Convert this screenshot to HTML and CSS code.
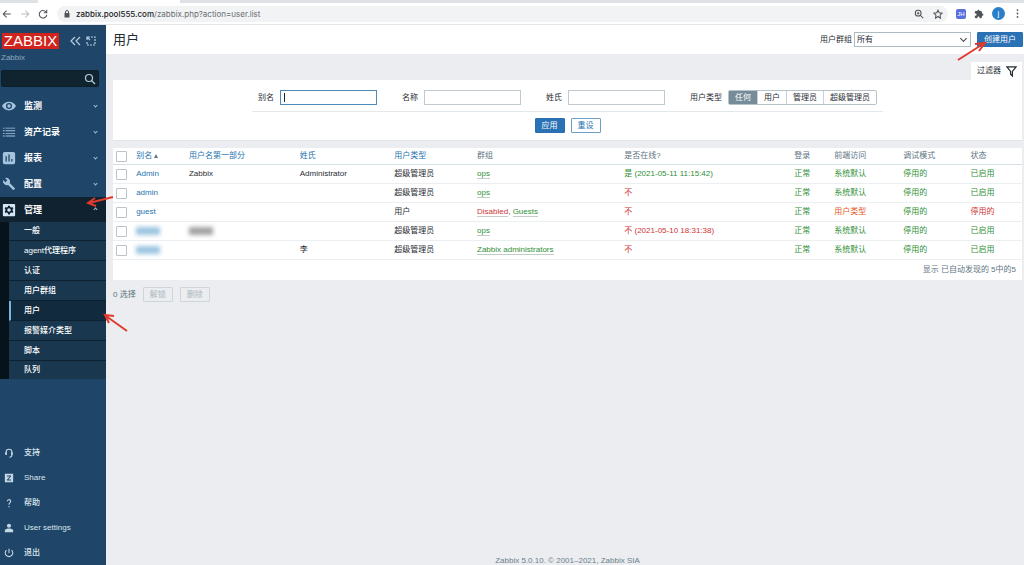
FILE: index.html
```
<!DOCTYPE html>
<html lang="zh-CN">
<head>
    <meta charset="UTF-8">
    <title>用户</title>
    <link rel="stylesheet" href="styles.css">
</head>
<body>
    <!-- 浏览器工具栏 -->
    <div class="tab-strip"><div class="tab-active"></div></div>
    <div class="toolbar">
        <svg class="tool-icon" viewBox="0 0 24 24"><path d="M21 12H4M11 4l-8 8 8 8"/></svg>
        <svg class="tool-icon tool-off" viewBox="0 0 24 24"><path d="M3 12h17M13 4l8 8-8 8"/></svg>
        <svg class="tool-icon" viewBox="0 0 24 24"><path d="M19 7a9 9 0 1 0 2 7M21 2v7h-7"/></svg>
        <div class="address">
            <svg class="lock" viewBox="0 0 12 16"><path d="M1 6h10v9H1z"/><path class="shackle" d="M3 7V4a3 3 0 0 1 6 0v3"/></svg>
            <span class="url"><b>zabbix.pool555.com</b>/zabbix.php?action=user.list</span>
            <svg class="tool-icon" viewBox="0 0 24 24"><circle cx="10" cy="10" r="7"/><path d="M15 15l7 7M7 10h6M10 7v6"/></svg>
            <svg class="tool-icon" viewBox="0 0 24 24"><path d="M12 3l3 6 7 1-5 5 1 7-6-4-6 4 1-7-5-5 7-1z"/></svg>
        </div>
        <span class="ext">JH</span>
        <svg class="tool-icon puzzle" viewBox="0 0 24 24"><path d="M20 11h-1V7a2 2 0 0 0-2-2h-4V4a2.500 2.500 0 0 0-5 0v1H4a2 2 0 0 0-2 2v4h1.500a2.700 2.700 0 0 1 0 5.400H2V20a2 2 0 0 0 2 2h4v-1.500a2.700 2.700 0 0 1 5.400 0V22H17a2 2 0 0 0 2-2v-4h1a2.500 2.500 0 0 0 0-5z"/></svg>
        <span class="avatar">j</span>
        <svg class="dots" viewBox="0 0 4 16"><circle cx="2" cy="3" r="1.300"/><circle cx="2" cy="8" r="1.300"/><circle cx="2" cy="13" r="1.300"/></svg>
    </div>

    <div class="page">
        <!-- 侧边栏 -->
        <aside class="sidebar">
            <div class="brand">
                <a class="logo" href="#">ZABBIX</a>
                <button class="icon-btn" aria-label="收起"><svg viewBox="0 0 12 12"><path d="M6 2L2 6l4 4M11 2L7 6l4 4"/></svg></button>
                <button class="icon-btn" aria-label="隐藏"><svg viewBox="0 0 12 12"><path d="M6 2h4v8H2V7" stroke-dasharray="2 1"/><path d="M2 5V2h3M2 2l3 3"/></svg></button>
            </div>
            <div class="server">Zabbix</div>
            <form class="search">
                <input type="text" aria-label="搜索">
                <button class="icon-btn" type="button" aria-label="搜索"><svg viewBox="0 0 12 12"><circle cx="5" cy="5" r="3.500"/><path d="M7.500 7.500L11 11"/></svg></button>
            </form>

            <ul class="menu">
                <li><a href="#">
                    <svg class="menu-icon" viewBox="0 0 16 16"><path fill-rule="evenodd" d="M8 3C4.500 3 1.500 5 0 8c1.500 3 4.500 5 8 5s6.500-2 8-5c-1.500-3-4.500-5-8-5zm0 1.500a3.500 3.500 0 1 1 0 7 3.500 3.500 0 0 1 0-7zM8 6a2 2 0 1 0 0 4 2 2 0 0 0 0-4z"/></svg>
                    监测<i class="chevron"></i></a></li>
                <li><a href="#">
                    <svg class="menu-icon" viewBox="0 0 16 16"><path d="M1 3h2v1H1zM4 3h11v1H4zM1 6h2v1H1zM4 6h11v1H4zM1 9h2v1H1zM4 9h11v1H4zM1 12h2v1H1zM4 12h11v1H4z"/></svg>
                    资产记录<i class="chevron"></i></a></li>
                <li><a href="#">
                    <svg class="menu-icon" viewBox="0 0 16 16"><path fill-rule="evenodd" d="M3 1h10a2 2 0 0 1 2 2v10a2 2 0 0 1-2 2H3a2 2 0 0 1-2-2V3a2 2 0 0 1 2-2zm1 5v6h1.500V6zm3.300-2v8h1.500V4zm3.200 5v3H12V9z"/></svg>
                    报表<i class="chevron"></i></a></li>
                <li><a href="#">
                    <svg class="menu-icon" viewBox="0 0 16 16"><path d="M15 13L9 7a4.500 4.500 0 0 0-5.500-5.800L6 3.800 4 6 1.200 3.400A4.500 4.500 0 0 0 7 9l6 6z"/></svg>
                    配置<i class="chevron"></i></a></li>
                <li class="open"><a href="#">
                    <svg class="menu-icon" viewBox="0 0 16 16"><path fill-rule="evenodd" d="M2 1h12a1 1 0 0 1 1 1v12a1 1 0 0 1-1 1H2a1 1 0 0 1-1-1V2a1 1 0 0 1 1-1zm5 2l-.4 1.500-1.200.7L4 4.700 3 6.500l1 1v1l-1 1 1 1.800 1.400-.5 1.200.7L7 13h2l.4-1.500 1.200-.7 1.400.5 1-1.800-1-1v-1l1-1-1-1.800-1.400.5-1.200-.7L9 3zm1 3a2 2 0 1 1 0 4 2 2 0 0 1 0-4z"/></svg>
                    管理<i class="chevron up"></i></a>
                    <svg class="arrow arrow-menu" viewBox="0 0 28 14"><path d="M27 2L3 8M9 3L2 8l8 3"/></svg>
                    <ul class="submenu">
                        <li><a href="#">一般</a></li>
                        <li><a href="#">agent代理程序</a></li>
                        <li><a href="#">认证</a></li>
                        <li><a href="#">用户群组</a></li>
                        <li class="selected"><a href="#">用户</a>
                            <svg class="arrow arrow-user" viewBox="0 0 26 20"><path d="M24 18L3 3M6 10L2 2l9 1"/></svg></li>
                        <li><a href="#">报警媒介类型</a></li>
                        <li><a href="#">脚本</a></li>
                        <li><a href="#">队列</a></li>
                    </ul>
                </li>
            </ul>

            <ul class="menu-bottom">
                <li><a href="#"><svg class="small-icon" viewBox="0 0 12 12"><path class="line" d="M2.500 8V5a3.500 3.500 0 0 1 7 0v3c0 2-1 3-3 3"/><path d="M1.500 5h2v3h-2zM8.500 5h2v3h-2z"/></svg>支持</a></li>
                <li><a href="#"><svg class="small-icon" viewBox="0 0 12 12"><path fill-rule="evenodd" d="M1 1h10v10H1zm2.500 2v1.200H7L3.500 8v1h5V7.800H5.200L8.500 4V3z"/></svg>Share</a></li>
                <li><a href="#"><svg class="small-icon" viewBox="0 0 12 12"><path class="line" d="M4 4a2 2 0 1 1 3 1.700C6 6.300 6 7 6 8M6 9.500V11"/></svg>帮助</a></li>
                <li><a href="#"><svg class="small-icon" viewBox="0 0 12 12"><circle cx="6" cy="3.300" r="2.500"/><path d="M1 11V9c0-2 3-2.500 5-2.500S11 7 11 9v2z"/></svg>User settings</a></li>
                <li><a href="#"><svg class="small-icon" viewBox="0 0 12 12"><path class="line" d="M3 2.500a4.500 4.500 0 1 0 6 0M6 1v5"/></svg>退出</a></li>
            </ul>
        </aside>

        <!-- 主内容 -->
        <main class="content">
            <header class="page-header">
                <h1>用户</h1>
                <label for="group">用户群组</label>
                <div class="select-box">
                    <select id="group"><option>所有</option></select>
                </div>
                <div class="create">
                    <button class="btn btn-primary" type="button">创建用户</button>
                    <svg class="arrow arrow-create" viewBox="0 0 30 20"><path d="M1 19L26 3M18 3l10-1-6 8"/></svg>
                </div>
            </header>

            <div class="filter-tab">
                <a href="#">过滤器
                    <svg viewBox="0 0 12 12"><path d="M1 1h10L7 6v5L5 9V6z"/></svg></a>
            </div>
            <form class="filter">
                <div class="filter-fields">
                    <div class="field">
                        <label for="alias">别名</label>
                        <div class="focus-box"><input class="text-input focused" type="text" id="alias"><span class="caret"></span></div>
                    </div>
                    <div class="field">
                        <label for="name">名称</label>
                        <input class="text-input" type="text" id="name">
                    </div>
                    <div class="field">
                        <label for="surname">姓氏</label>
                        <input class="text-input" type="text" id="surname">
                    </div>
                    <div class="field">
                        <span>用户类型</span>
                        <div class="radios">
                            <input type="radio" name="type" id="type-any" checked><label for="type-any">任何</label>
                            <input type="radio" name="type" id="type-user"><label for="type-user">用户</label>
                            <input type="radio" name="type" id="type-admin"><label for="type-admin">管理员</label>
                            <input type="radio" name="type" id="type-super"><label for="type-super">超级管理员</label>
                        </div>
                    </div>
                </div>
                <div class="filter-buttons">
                    <button class="btn btn-primary" type="button">应用</button>
                    <button class="btn" type="button">重设</button>
                </div>
            </form>

            <table class="list">
                <colgroup>
                    <col class="c-check"><col class="c-alias"><col class="c-name"><col class="c-surname"><col class="c-type"><col class="c-groups">
                    <col class="c-online"><col class="c-login"><col class="c-front"><col class="c-debug"><col>
                </colgroup>
                <thead>
                    <tr>
                        <th><input type="checkbox" aria-label="全选"></th>
                        <th><a href="#">别名 <i class="sort"></i></a></th>
                        <th><a href="#">用户名第一部分</a></th>
                        <th><a href="#">姓氏</a></th>
                        <th><a href="#">用户类型</a></th>
                        <th>群组</th>
                        <th>是否在线?</th>
                        <th>登录</th>
                        <th>前端访问</th>
                        <th>调试模式</th>
                        <th>状态</th>
                    </tr>
                </thead>
                <tbody>
                    <tr>
                        <td><input type="checkbox" aria-label="Admin"></td>
                        <td><a href="#">Admin</a></td>
                        <td>Zabbix</td>
                        <td>Administrator</td>
                        <td>超级管理员</td>
                        <td><a class="group green" href="#">ops</a></td>
                        <td class="green">是 (2021-05-11 11:15:42)</td>
                        <td class="green">正常</td>
                        <td class="green">系统默认</td>
                        <td class="green">停用的</td>
                        <td class="green">已启用</td>
                    </tr>
                    <tr>
                        <td><input type="checkbox" aria-label="admin"></td>
                        <td><a href="#">admin</a></td>
                        <td></td>
                        <td></td>
                        <td>超级管理员</td>
                        <td><a class="group green" href="#">ops</a></td>
                        <td class="red">不</td>
                        <td class="green">正常</td>
                        <td class="green">系统默认</td>
                        <td class="green">停用的</td>
                        <td class="green">已启用</td>
                    </tr>
                    <tr>
                        <td><input type="checkbox" aria-label="guest"></td>
                        <td><a href="#">guest</a></td>
                        <td></td>
                        <td></td>
                        <td>用户</td>
                        <td><a class="group red" href="#">Disabled</a>, <a class="group green" href="#">Guests</a></td>
                        <td class="red">不</td>
                        <td class="green">正常</td>
                        <td class="orange">用户类型</td>
                        <td class="green">停用的</td>
                        <td class="red">停用的</td>
                    </tr>
                    <tr>
                        <td><input type="checkbox" aria-label="用户4"></td>
                        <td><span class="masked"></span></td>
                        <td><span class="masked masked-dark"></span></td>
                        <td></td>
                        <td>超级管理员</td>
                        <td><a class="group green" href="#">ops</a></td>
                        <td class="red">不 (2021-05-10 18:31:38)</td>
                        <td class="green">正常</td>
                        <td class="green">系统默认</td>
                        <td class="green">停用的</td>
                        <td class="green">已启用</td>
                    </tr>
                    <tr>
                        <td><input type="checkbox" aria-label="用户5"></td>
                        <td><span class="masked"></span></td>
                        <td></td>
                        <td>李</td>
                        <td>超级管理员</td>
                        <td><a class="group green" href="#">Zabbix administrators</a></td>
                        <td class="red">不</td>
                        <td class="green">正常</td>
                        <td class="green">系统默认</td>
                        <td class="green">停用的</td>
                        <td class="green">已启用</td>
                    </tr>
                </tbody>
            </table>
            <div class="list-stats">显示 已自动发现的 5中的5</div>

            <div class="actions">
                <span>0 选择</span>
                <button class="btn" type="button" disabled>解锁</button>
                <button class="btn" type="button" disabled>删除</button>
            </div>

            <footer class="copyright">Zabbix 5.0.10. © 2001–2021, <a href="#">Zabbix SIA</a></footer>
        </main>
    </div>
</body>
</html>
```

FILE: styles.css
```
* {
    box-sizing: border-box;
}
body {
    margin: 0;
    height: 100vh;
    display: flex;
    flex-direction: column;
    overflow: hidden;
    font-family: "Liberation Sans", "Noto Sans CJK SC", sans-serif;
    font-size: 8px;
    line-height: 12px;
    color: #1f2c33;
    background-color: #ebedf0;
}
ul {
    list-style: none;
    margin: 0;
    padding: 0;
}
a {
    color: #1f74b0;
    text-decoration: none;
}
input, select, button {
    font: inherit;
    color: inherit;
    margin: 0;
}
h1 {
    margin: 0 auto 0 0;
    font-size: 13px;
    line-height: 18px;
    font-weight: normal;
}

/* 浏览器工具栏 */
.tab-strip {
    flex: none;
    height: 3px;
    background-color: #dee1e6;
}
.tab-active {
    width: 142px;
    height: 3px;
    margin-left: 38px;
    background-color: #fff;
}
.toolbar {
    flex: none;
    display: flex;
    align-items: center;
    gap: 8px;
    height: 22px;
    padding: 0 5px 0 2px;
    background-color: #fff;
    border-bottom: 1px solid #e3e5e8;
}
.tool-icon {
    flex: none;
    width: 10px;
    height: 10px;
    fill: none;
    stroke: #50545a;
    stroke-width: 2.500;
}
.tool-off {
    stroke: #b9bcc0;
}
.puzzle {
    fill: #50545a;
    stroke: none;
}
.address {
    flex: 1;
    display: flex;
    align-items: center;
    gap: 9px;
    height: 16px;
    margin-left: 1px;
    padding: 0 5px 0 7px;
    border-radius: 8px;
    background-color: #f1f3f4;
}
.lock {
    width: 6px;
    height: 8px;
    margin-right: -3px;
    fill: #50545a;
}
.shackle {
    fill: none;
    stroke: #50545a;
    stroke-width: 2;
}
.url {
    flex: 1;
    font-family: Inter, "Noto Sans", sans-serif;
    color: #6a6e73;
}
.url b {
    font-weight: 500;
    color: #202124;
}
.ext {
    width: 10px;
    height: 10px;
    border-radius: 2px;
    background-color: #5b6fe0;
    color: #fff;
    font-size: 6px;
    line-height: 10px;
    text-align: center;
}
.avatar {
    width: 13px;
    height: 13px;
    margin-right: 3px;
    border-radius: 50%;
    background-color: #2b7fc8;
    color: #fff;
    line-height: 13px;
    text-align: center;
}
.dots {
    width: 3px;
    height: 11px;
    fill: #50545a;
}

.page {
    flex: 1;
    display: flex;
    min-height: 0;
}

/* 侧边栏 */
.sidebar {
    flex: none;
    width: 106px;
    display: flex;
    flex-direction: column;
    background-color: #1f4568;
}
.sidebar a {
    color: #fff;
}
.brand {
    display: flex;
    align-items: center;
    gap: 4px;
    padding: 8px 0 0 2px;
}
.sidebar .logo {
    width: 57px;
    margin-right: 6px;
    background-color: #d0241c;
    font-size: 15px;
    line-height: 16px;
    text-align: center;
}
.icon-btn {
    padding: 0;
    border: none;
    background: none;
    line-height: 0;
}
.icon-btn svg {
    width: 12px;
    height: 12px;
    fill: none;
    stroke: #b4cde0;
    stroke-width: 1.200;
}
.server {
    padding: 3px 1px;
    color: #8ea9bf;
}
.search {
    display: flex;
    align-items: center;
    height: 17px;
    margin: 3px 7px 6px 1px;
    padding-right: 2px;
    border: 1px solid #0c1f2d;
    border-radius: 2px;
    background-color: #10242f;
}
.search input {
    flex: 1;
    min-width: 0;
    border: none;
    outline: none;
    background: none;
}
.menu {
    display: flex;
    flex-direction: column;
    gap: 1px;
}
.menu li {
    position: relative;
}
.menu > li > a {
    display: flex;
    align-items: center;
    height: 25px;
    padding: 0 9px 0 2px;
    font-size: 9px;
    font-weight: bold;
}
.menu-icon {
    width: 14px;
    height: 14px;
    margin-right: 8px;
    fill: #a5c5de;
}
.chevron {
    width: 3px;
    height: 3px;
    margin-left: auto;
    border-right: 1px solid #a5c0d6;
    border-bottom: 1px solid #a5c0d6;
    transform: rotate(45deg);
}
.chevron.up {
    transform: rotate(225deg);
}
.open {
    background-color: #06131b;
}
.open > a {
    background-color: #10222f;
}
.open .menu-icon {
    fill: #d3e6f5;
}
.submenu {
    margin-left: 9px;
}
.submenu a {
    display: block;
    padding-left: 15px;
    border-bottom: 1px solid #0c2232;
    background-color: #193850;
    font-weight: 500;
    line-height: 19px;
}
.submenu li:first-child a {
    line-height: 18px;
}
.submenu li:last-child a {
    border-bottom: none;
    line-height: 18px;
}
.submenu .selected a {
    padding-left: 13px;
    border-left: 2px solid #78b4e4;
    background-color: #122a3e;
}
.menu-bottom {
    margin-top: auto;
}
.menu-bottom a {
    display: flex;
    align-items: center;
    height: 25px;
    padding-left: 4px;
    color: #dbe6ef;
    font-weight: 500;
}
.small-icon {
    width: 10px;
    height: 10px;
    margin-right: 10px;
    fill: #c3d7e6;
}
.small-icon .line {
    fill: none;
    stroke: #c3d7e6;
    stroke-width: 1.300;
}

/* 红色标注箭头 */
.arrow {
    position: absolute;
    z-index: 2;
    fill: none;
    stroke: #e03a2e;
    stroke-width: 2;
}
.arrow-menu {
    top: -2px;
    left: 86px;
    width: 28px;
    height: 14px;
}
.arrow-user {
    top: 12px;
    left: 94px;
    width: 26px;
    height: 20px;
}
.arrow-create {
    top: 9px;
    right: 36px;
    width: 30px;
    height: 20px;
}

/* 主内容 */
.content {
    flex: 1;
    min-width: 0;
    display: flex;
    flex-direction: column;
    padding: 0 2px 0 7px;
}
.page-header {
    display: flex;
    align-items: center;
    height: 29px;
    margin: 0 -2px 8px -7px;
    padding: 0 1px 0 7px;
    background-color: #fff;
}
.select-box {
    width: 117px;
    margin: 0 6px 0 2px;
    position: relative;
}
.select-box::after {
    content: "";
    position: absolute;
    top: 4px;
    right: 5px;
    width: 4px;
    height: 4px;
    border-right: 1px solid #444;
    border-bottom: 1px solid #444;
    transform: rotate(45deg);
}
.select-box select {
    display: block;
    width: 100%;
    height: 15px;
    padding: 0 2px;
    appearance: none;
    border: 1px solid #acbbc2;
    border-radius: 0;
    background-color: #fff;
}
.create {
    position: relative;
}
.btn {
    height: 15px;
    padding: 0 6px;
    border: 1px solid #6b9fc6;
    border-radius: 1px;
    background-color: #fff;
    color: #1f74b0;
    line-height: 13px;
    white-space: nowrap;
}
.btn-primary {
    border-color: #2a6fb0;
    background-color: #2a72b5;
    color: #fff;
}
.create .btn {
    display: block;
}
.btn:disabled {
    border-color: #d0d5d9;
    background-color: #ebedf0;
    color: #acb8bf;
}
.filter-tab {
    display: flex;
    justify-content: flex-end;
}
.filter-tab a {
    display: flex;
    align-items: center;
    gap: 5px;
    height: 18px;
    padding: 0 5px 0 6px;
    background-color: #fff;
    color: #1f2c33;
}
.filter-tab svg {
    width: 11px;
    height: 11px;
    fill: none;
    stroke: #1f2c33;
    stroke-width: 1.300;
}
.filter {
    display: flex;
    flex-direction: column;
    align-items: center;
    height: 61px;
    margin-bottom: 7px;
    padding-top: 10px;
    background-color: #fff;
    border: 1px solid #e1e4e8;
    border-width: 0 0 1px;
}
.filter-fields {
    display: flex;
    gap: 25px;
    padding: 0 6px 6px;
    border-bottom: 1px solid #e5e8ea;
}
.field {
    display: flex;
    align-items: center;
    gap: 6px;
}
.text-input {
    display: block;
    width: 97px;
    height: 15px;
    padding: 0 3px;
    border: 1px solid #c0c9ce;
    outline: none;
}
.text-input.focused {
    border-color: #4f8ab8;
}
.focus-box {
    position: relative;
}
.caret {
    position: absolute;
    top: 3px;
    left: 4px;
    width: 1px;
    height: 9px;
    background-color: #222;
}
.radios {
    display: flex;
    position: relative;
    border: 1px solid #b7c3c9;
    border-radius: 2px;
}
.radios input {
    position: absolute;
    opacity: 0;
}
.radios label {
    padding: 0 6px;
    line-height: 13px;
}
.radios label + input + label {
    border-left: 1px solid #c8d1d6;
}
.radios input:checked + label {
    background-color: #768d99;
    color: #fff;
}
.filter-buttons {
    display: flex;
    gap: 6px;
    padding-top: 6px;
}

/* 用户列表 */
.list {
    width: 100%;
    table-layout: fixed;
    border-collapse: separate;
    border-spacing: 0;
    background-color: #fff;
}
.list th, .list td {
    height: 19px;
    padding: 0 0 0 5px;
    border-bottom: 1px solid #eceff1;
    text-align: left;
    font-weight: normal;
    white-space: nowrap;
}
.list th {
    height: 17px;
    border-bottom-color: #d5dfe4;
    color: #5d7482;
}
.list th:first-child, .list td:first-child {
    padding-left: 3px;
}
.list input {
    display: block;
    width: 11px;
    height: 11px;
    appearance: none;
    border: 1px solid #b9c4ca;
    border-radius: 1px;
    background-color: #fff;
}
.c-check { width: 2%; }
.c-alias { width: 5.8%; }
.c-name { width: 12.2%; }
.c-surname { width: 10.4%; }
.c-type { width: 9.1%; }
.c-groups { width: 16.2%; }
.c-online { width: 18.7%; }
.c-login { width: 4.4%; }
.c-front { width: 7.6%; }
.c-debug { width: 7.4%; }
.sort {
    display: inline-block;
    border: 2px solid transparent;
    border-top: none;
    border-bottom: 4px solid #5d7482;
}
.list .green {
    color: #2f8f36;
}
.list .red {
    color: #cf3434;
}
.list .orange {
    color: #e45a28;
}
.group {
    border-bottom: 1px solid #c3cdc6;
}
.masked {
    display: block;
    width: 24px;
    height: 8px;
    background-color: #9cc5e0;
    filter: blur(2px);
}
.masked-dark {
    background-color: #a3a3a3;
}
.list-stats {
    padding: 4px 6px 4px;
    background-color: #fff;
    color: #5d7482;
    text-align: right;
}
.actions {
    display: flex;
    align-items: center;
    gap: 7px;
    padding-top: 7px;
    color: #5d7482;
}
.copyright {
    margin-top: auto;
    line-height: 8px;
    text-align: center;
    color: #6b7f8b;
}
.copyright a {
    color: inherit;
}
```
